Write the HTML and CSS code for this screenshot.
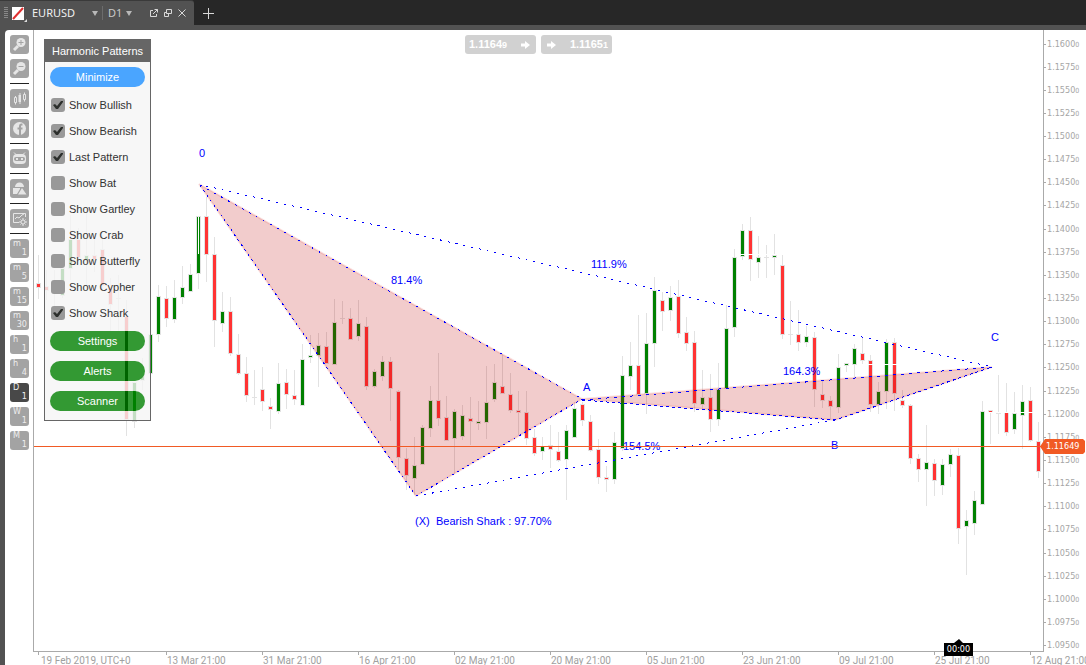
FILE: index.html
```html
<!DOCTYPE html>
<html lang="en">
<head>
<meta charset="utf-8">
<title>EURUSD D1</title>
<link rel="stylesheet" href="styles.css">
</head>
<body>
<header class="tabbar">
  <div class="tab">
    <span class="grip"></span>
    <svg class="swatch" width="16" height="16" viewBox="0 0 16 16"><rect width="12" height="13" fill="#fff"/><path d="M1 12L11 1" stroke="#e03030" stroke-width="2"/><path d="M15 12v3h-3z" fill="#ddd"/></svg>
    <button class="pick symbol"><span>EURUSD</span><span class="caret"></span></button>
    <button class="pick period"><span>D1</span><span class="caret"></span></button>
    <span class="tools">
      <button aria-label="Detach"><svg width="8" height="8" viewBox="0 0 8 8"><path d="M3 1.5H.5v6h6V5M4.500 .5h3v3M7.500 .5L3 5" /></svg></button>
      <button aria-label="Restore"><svg width="8" height="8" viewBox="0 0 8 8"><path d="M2.500 .5h5v4h-5zM2.500 3.500h-2v4h4v-3"/></svg></button>
      <button aria-label="Close"><svg width="8" height="8" viewBox="0 0 8 8"><path d="M.5 .5l7 7M7.500 .5l-7 7"/></svg></button>
    </span>
  </div>
  <button class="add" aria-label="New tab"><svg width="12" height="12" viewBox="0 0 12 12"><path d="M5.500 0v11M0 5.500h11"/></svg></button>
</header>
<main class="window">
  <nav class="toolbar">
    <button class="tool" aria-label="Zoom in"><svg viewBox="0 0 19 19"><circle cx="11" cy="7.500" r="4.500" class="f"/><path d="M8 11l-4 4" class="thick"/><path d="M11 5v5M8.500 7.500h5" class="cut"/></svg></button>
    <button class="tool" aria-label="Zoom out"><svg viewBox="0 0 19 19"><circle cx="11" cy="7.500" r="4.500" class="f"/><path d="M8 11l-4 4" class="thick"/><path d="M8.500 7.500h5" class="cut"/></svg></button>
    <hr>
    <button class="tool" aria-label="Chart type"><svg viewBox="0 0 19 19"><path d="M4.500 8.500h2v5h-2zM13.500 5.500h2v5h-2zM5.500 7v1.500M5.500 13.500v2M14.500 3.500v2M14.500 10.500v2M10 4v11"/><path d="M8.500 6h2.500v7H8.500z" class="f"/></svg></button>
    <hr>
    <button class="tool" aria-label="Facebook"><svg viewBox="0 0 19 19"><circle cx="9.500" cy="9.500" r="6.500" class="f"/><path d="M12.500 5.500h-1q-1.500 0-1.500 2V16M7.500 9.500h5" class="cut wide"/></svg></button>
    <hr>
    <button class="tool" aria-label="Robots"><svg viewBox="0 0 19 19"><path d="M4 3.500l2.500 2.500M15 3.500L12.500 6"/><rect x="3" y="5" width="13" height="10" rx="4" class="f"/><rect x="4" y="8" width="11" height="4" rx="2" class="hole"/><path d="M6 10h2M11 10h2" class="wide"/></svg></button>
    <hr>
    <button class="tool" aria-label="Shapes"><svg viewBox="0 0 19 19"><path d="M5 8a4.500 4.500 0 0 1 9 0zM3 9h7v1l-3 5H3zM12 9l4.500 6.500H8z" class="f"/></svg></button>
    <hr>
    <button class="tool" aria-label="Indicators"><svg viewBox="0 0 19 19"><path d="M9 13.500H3.500v-9H15.500V8M5 10l2-2 2 1 3-3 2-1"/><circle cx="13" cy="13" r="2"/><path d="M13 9v2M13 15v2M9 13h2M15 13h2M10.500 10.500l1 1M14.500 14.500l1 1M15.500 10.500l-1 1M11.500 14.500l-1 1"/></svg></button>
    <hr>
    <button class="tool tf"><span>m</span><b>1</b></button>
    <button class="tool tf"><span>m</span><b>5</b></button>
    <button class="tool tf"><span>m</span><b>15</b></button>
    <button class="tool tf"><span>m</span><b>30</b></button>
    <button class="tool tf"><span>h</span><b>1</b></button>
    <button class="tool tf"><span>h</span><b>4</b></button>
    <button class="tool tf on"><span>D</span><b>1</b></button>
    <button class="tool tf"><span>W</span><b>1</b></button>
    <button class="tool tf"><span>M</span><b>1</b></button>
  </nav>
  <div class="chart">
    <section class="plot">
      <svg class="canvas" width="100%" height="100%">
        <g transform="translate(-34 -30)">
          <g id="candles" shape-rendering="crispEdges"></g>
          <g fill="#fff" shape-rendering="crispEdges">
            <path d="M198 217h1v37h-1zM738 254h50v1h-50zM866 364h32v1h-32zM986 412h48v1h-48z"/>
          </g>
          <g class="shape">
            <path d="M199 184L582 399L416 496Z"/>
            <path d="M582 399L992 367L835 420Z"/>
          </g>
          <g class="dots">
            <path d="M200 185L582 399" stroke-dasharray="2 6"/>
            <path d="M200 185L416 496L582 399" stroke-dasharray="2 4"/>
            <path d="M582 400L992 367" stroke-dasharray="3 5"/>
            <path d="M582 400L835 420L992 367" stroke-dasharray="3 3"/>
            <path d="M206 186L992 367M416 496L835 420" stroke-dasharray="2 6"/>
          </g>
          <g class="label">
            <text x="199" y="157">0</text>
            <text x="391" y="284">81.4%</text>
            <text x="591" y="268">111.9%</text>
            <text x="783" y="375">164.3%</text>
            <text x="623" y="450">154.5%</text>
            <text x="583" y="391">A</text>
            <text x="831" y="449">B</text>
            <text x="991" y="341">C</text>
            <text x="415" y="525">(X)</text>
            <text x="436" y="525">Bearish Shark : 97.70%</text>
          </g>
        </g>
        <rect y="416" width="100%" height="1" fill="#f15a24"/>
      </svg>
      <div class="quotes">
        <button class="quote"><span>1.1164<small>9</small></span><svg width="9" height="8" viewBox="0 0 9 8"><path d="M0 2.500h4V0l5 4-5 4V5.500H0z" fill="#fff"/></svg></button>
        <button class="quote"><svg width="9" height="8" viewBox="0 0 9 8"><path d="M0 2.500h4V0l5 4-5 4V5.500H0z" fill="#fff"/></svg><span>1.1165<small>1</small></span></button>
      </div>
      <form class="panel">
        <h2>Harmonic Patterns</h2>
        <div class="body">
          <button type="button" class="pill blue">Minimize</button>
          <label><input type="checkbox" checked>Show Bullish</label>
          <label><input type="checkbox" checked>Show Bearish</label>
          <label><input type="checkbox" checked>Last Pattern</label>
          <label><input type="checkbox">Show Bat</label>
          <label><input type="checkbox">Show Gartley</label>
          <label><input type="checkbox">Show Crab</label>
          <label><input type="checkbox">Show Butterfly</label>
          <label><input type="checkbox">Show Cypher</label>
          <label><input type="checkbox" checked>Show Shark</label>
          <div class="actions">
            <button type="button" class="pill green">Settings</button>
            <button type="button" class="pill green">Alerts</button>
            <button type="button" class="pill green last">Scanner</button>
          </div>
        </div>
      </form>
    </section>
    <aside class="prices">
      <ol id="prices"></ol>
      <span class="current">1.11649</span>
    </aside>
    <footer class="times">
      <span class="first">19 Feb 2019, UTC+0</span><span>13 Mar 21:00</span><span>31 Mar 21:00</span><span>16 Apr 21:00</span><span>02 May 21:00</span><span>20 May 21:00</span><span>05 Jun 21:00</span><span>23 Jun 21:00</span><span>09 Jul 21:00</span><span>25 Jul 21:00</span><span>12 Aug 21:00</span>
    </footer>
    <span class="countdown">00:00</span>
  </div>
</main>
<script src="chart.js"></script>
</body>
</html>
```
FILE: styles.css
```css
* { box-sizing: border-box; }
body {
  margin: 0;
  height: 100vh;
  display: flex;
  flex-direction: column;
  overflow: hidden;
  background: #525252;
  font: 11px/14px "Liberation Sans", Arial, sans-serif;
}
button { border: 0; padding: 0; margin: 0; background: none; color: inherit; font: inherit; }
svg { display: block; }

.tabbar { display: flex; height: 25px; background: #272727; flex: none; }
.tab {
  display: flex;
  align-items: center;
  width: 194px;
  padding-left: 4px;
  background: #525252;
  border-top: 1px solid #3a3a3a;
  border-radius: 0 3px 0 0;
  color: #f0f0f0;
  font: 11px/14px "Noto Sans", sans-serif;
}
.grip { width: 4px; height: 12px; margin-right: 4px; background: repeating-linear-gradient(#888 0 1px, #525252 1px 2px); }
.swatch { margin: 3px 4px 0 0; }
.pick { display: flex; align-items: center; justify-content: space-between; }
.symbol { width: 71px; padding-right: 4px; border-right: 1px solid #6c6c6c; }
.period { width: 29px; padding: 0 0 0 5px; color: #c8c8c8; }
.caret { border: 3px solid transparent; border-top: 5px solid #b8b8b8; border-bottom: 0; }
.tools { display: flex; gap: 6px; margin-left: 18px; }
.tools path, .add path { fill: none; stroke: #d8d8d8; }
.add { padding: 2px 9px 0; }

.window { flex: 1; min-height: 0; display: flex; margin: 5px 0 0 5px; background: #fff; border-radius: 4px 0 0 0; }
.toolbar { display: flex; flex-direction: column; gap: 5px; width: 28px; padding: 5px 4px 0 5px; flex: none; }
.toolbar hr { width: 19px; height: 1px; border: 0; margin: 0; background: #222; flex: none; }
.tool { width: 19px; height: 19px; border-radius: 3px; background: #a3a3a3; flex: none; color: #eee; }
.tool path, .tool circle { fill: none; stroke: #e6e6e6; }
.tool .f { fill: #e6e6e6; stroke: none; }
.tool .hole { fill: #a3a3a3; }
.tool .thick { stroke-width: 3; }
.tool .cut { stroke: #a3a3a3; }
.tool .wide { stroke-width: 2; }
.tf { display: flex; flex-direction: column; justify-content: space-between; padding: 0 2px 1px 3px; font: 9px/9px "DejaVu Sans Condensed", "DejaVu Sans", sans-serif; text-align: left; }
.tf b { font-weight: normal; text-align: right; }
.on { background: #484848; }

.chart { position: relative; flex: 1; min-width: 0; display: grid; grid-template: minmax(0, 1fr) 13px / minmax(0, 1fr) 43px; }
.plot { position: relative; border: solid #aaa; border-width: 0 0 1px 1px; overflow: hidden; }
.canvas { position: absolute; inset: 0; }
.shape path { fill: rgba(190, 0, 0, .2); stroke: rgba(212, 0, 0, .12); stroke-width: 2; }
.dots path { fill: none; stroke: #00f; shape-rendering: crispEdges; }
.label { fill: #00f; font-size: 11px; }

.quotes { position: absolute; inset: 5px 0 auto; display: flex; justify-content: center; gap: 5px; }
.quote { display: flex; align-items: center; justify-content: space-between; width: 71px; height: 19px; padding: 0 6px 0 4px; border-radius: 3px; background: #d1d1d1; color: #fff; font-weight: bold; }
.quote + .quote { padding: 0 4px 0 6px; }
.quote small { font-size: 9px; }

.panel { position: absolute; left: 10px; top: 9px; width: 107px; margin: 0; border: 1px solid #666; color: #333; }
.panel h2 { margin: 0; height: 22px; background: #666; color: #fff; text-align: center; font-size: 11px; font-weight: normal; line-height: 22px; }
.body { padding: 5px 5px 9px; background: rgba(245, 245, 245, .8); }
.pill { display: block; width: 100%; height: 20px; border-radius: 10px; color: #fff; }
.blue { background: #4aa5ff; margin-bottom: 5px; }
.panel label { display: flex; align-items: center; gap: 4px; height: 26px; padding-left: 1px; white-space: nowrap; }
.panel input { appearance: none; display: block; margin: 0; width: 14px; height: 14px; border-radius: 3px; background: #999; }
.panel input:checked { background: #999 conic-gradient(#2c2f2c 0 0) 0 0 / 0 0 no-repeat; }
.panel input:checked::after { content: ""; display: block; width: 14px; height: 14px; background: #2c2f2c; clip-path: polygon(2px 7px, 4px 6px, 6px 8px, 10px 3px, 12px 3px, 12px 4px, 7px 11px, 5px 11px); }
.actions { display: grid; gap: 10px; padding-top: 5px; }
.green { background: linear-gradient(90deg, transparent 75px, #006400 75px 78px, transparent 78px) #393; }
.last { background: linear-gradient(90deg, transparent 75px, #006400 75px 78px, transparent 78px 83px, #008000 83px 86px, transparent 86px) #393; }

.prices { position: relative; border-left: 1px solid #aaa; color: #a6a6a6; font: 9px/14px "DejaVu Sans Condensed", "DejaVu Sans", sans-serif; }
.prices ol { height: calc(100% + 1px); margin: 0; padding: 7px 0 0; list-style: none; display: flex; flex-direction: column; justify-content: space-between; }
.prices li { display: flex; align-items: center; gap: 1px; height: 14px; }
.prices li::before { content: ""; width: 2px; height: 1px; background: #aaa; }
.prices small { font-size: 7px; }
.current { position: absolute; left: -4px; top: 409px; width: 45px; height: 15px; padding-left: 6px; background: #f15a24; color: #fff; line-height: 15px; clip-path: polygon(0 50%, 5px 0, 43px 0, 45px 2px, 45px 13px, 43px 100%, 5px 100%); }

.times { grid-column: 1 / -1; display: flex; overflow: hidden; padding-left: 5px; color: #a0a0a0; font: 10px/18px Roboto, sans-serif; white-space: nowrap; }
.times span { flex: none; width: 96px; background: linear-gradient(#aaa, #aaa) 0 0 / 1px 3px no-repeat; padding-left: 1px; }
.times .first { width: 128px; padding-left: 3px; }
.countdown { position: absolute; right: 113px; bottom: 9px; width: 29px; height: 17px; padding-top: 4px; background: #000; clip-path: polygon(0 4px, 10px 4px, 15px 0, 19px 4px, 100% 4px, 100% 100%, 0 100%); color: #fff; font: 9px/13px "DejaVu Sans Condensed", "DejaVu Sans", sans-serif; text-align: center; }
```
FILE: chart.js
```js
// One row per day: high, body top, body bottom, low, direction (r falling, g rising, d unchanged)
const days = `255 284 287 299 r|270 287 290 300 r|270 291 291 310 d|258 269 295 298 g|215 240 268 280 g|228 240 257 262 r|210 256 260 285 g|238 256 259 272 r|235 250 285 290 r|278 288 304 332 r|275 298 298 332 d|300 317 419 436 r|382 383 421 428 g|358 374 380 390 g|330 335 373 374 g
285 297 334 342 g|286 299 318 327 r|280 298 319 323 g|266 288 297 304 g|264 275 291 292 g|216 217 273 289 g|197 217 254 282 r|237 255 320 347 r|292 312 323 332 g|297 312 353 356 r|334 355 373 375 r|357 374 395 402 r|370 397 397 405 d|367 390 401 411 r|398 407 409 429 r
363 384 411 414 g|369 383 394 409 r|370 396 399 405 r|344 360 405 406 g|335 356 357 363 g|333 346 355 387 g|332 347 363 364 r|299 323 364 365 g|301 318 318 324 d|308 319 339 340 r|300 324 336 341 g|317 327 386 390 r|369 372 386 388 g|356 362 376 381 g|357 362 388 421 r
390 392 457 469 r|448 459 475 490 r|437 466 478 495 g|425 428 464 465 g|386 401 428 437 g|353 401 418 426 r|396 418 440 441 r|409 412 438 474 g|405 416 436 440 g|397 419 421 445 r|401 422 423 430 g|366 403 422 439 g|364 383 399 402 g|354 387 393 394 r|373 395 410 413 r
391 411 412 435 r|391 413 438 445 r|429 438 453 456 r|437 447 451 460 g|425 446 449 468 r|432 452 460 462 r|425 431 459 500 g|402 409 437 438 g|402 405 420 426 r|415 422 450 452 r|439 450 477 484 r|466 478 479 492 r|432 443 479 484 g|356 376 448 451 g|342 366 376 390 g
315 366 394 395 r|313 344 393 414 g|277 291 343 367 g|292 301 311 331 r|286 298 310 321 g|280 297 333 338 r|317 333 343 351 r|331 343 403 412 r|370 398 404 410 g|374 398 419 432 r|363 390 419 426 g|305 329 388 389 g|249 258 327 337 g|224 231 256 260 g|217 231 259 281 r
236 258 262 278 g|245 257 257 278 d|234 256 257 275 g|255 266 334 339 r|301 334 334 345 d|310 335 342 351 r|326 337 342 347 g|332 338 389 407 r|380 395 400 408 r|396 401 406 420 r|354 368 407 413 g|363 364 365 372 g|344 349 364 378 g|337 354 360 364 r|355 361 404 412 r
382 392 404 414 g|339 343 391 409 g|338 343 393 411 r|390 401 405 408 r|404 406 458 464 r|454 459 469 482 r|425 463 469 506 g|459 464 480 496 r|459 465 485 495 g|449 455 464 477 g|448 456 528 544 r|510 521 526 575 g|491 501 523 535 g|401 412 504 505 g|410 411 412 444 r
375 413 413 434 d|383 413 432 436 r|392 414 429 434 g|385 402 415 449 g|387 401 440 442 r|422 442 471 478 r`;

const rect = (x, y, w, h, fill) => `<rect x="${x}" y="${y}" width="${w}" height="${h}" fill="${fill}"/>`;
document.getElementById("candles").innerHTML = days.split(/[|\n]/).map((row, i) => {
  const [high, top, bottom, low, kind] = row.split(" ");
  const x = 38 + 8 * i;
  const wick = rect(x, high, 1, low - high, "#e2e2e2");
  if (kind === "d") return wick + rect(x - 2, top, 5, 1, "#e2e2e2");
  return wick + rect(x - 2, top - 1, 5, bottom - top + 2, "#e2e2e2") +
    rect(x - 1, top, 3, bottom - top, kind === "r" ? "#f33" : "#008000");
}).join("");

let scale = "";
for (let p = 11600; p >= 10950; p -= 25) scale += `<li><span>${(p / 10000).toFixed(4)}<small>0</small></span></li>`;
document.getElementById("prices").innerHTML = scale;
```
